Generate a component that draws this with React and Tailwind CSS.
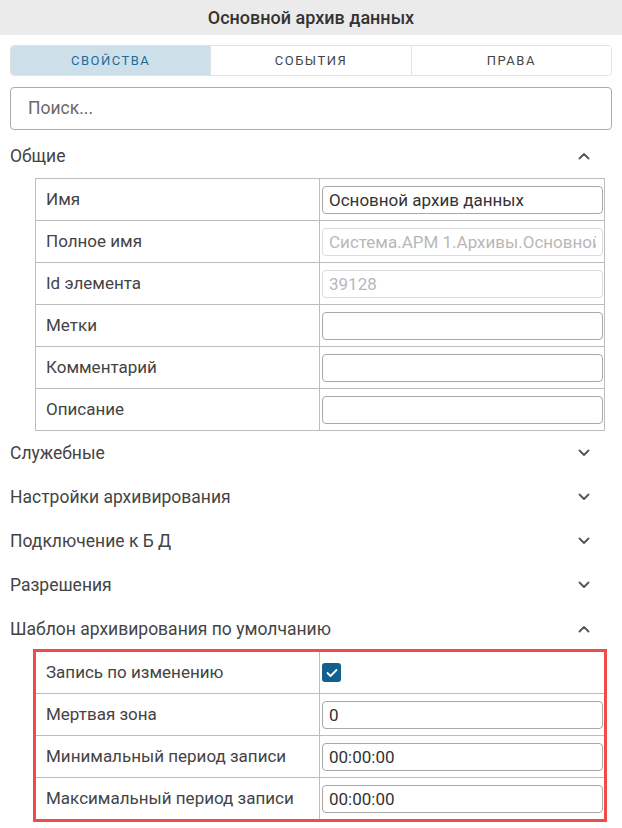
import { useState } from "react";

const TABS = ["Свойства", "События", "Права"];

const GENERAL = [
  { label: "Имя", value: "Основной архив данных" },
  { label: "Полное имя", value: "Система.АРМ 1.Архивы.Основной архив данных", disabled: true },
  { label: "Id элемента", value: "39128", disabled: true },
  { label: "Метки", value: "" },
  { label: "Комментарий", value: "" },
  { label: "Описание", value: "" },
];

const COLLAPSED = ["Служебные", "Настройки архивирования", "Подключение к Б Д", "Разрешения"];

const TEMPLATE = [
  { label: "Запись по изменению", check: true },
  { label: "Мертвая зона", value: "0" },
  { label: "Минимальный период записи", value: "00:00:00" },
  { label: "Максимальный период записи", value: "00:00:00" },
];

function Chevron({ up }) {
  return (
    <svg width="12" height="8" viewBox="0 0 12 8" className="mr-[32px]">
      <path
        d={up ? "M1.5 6.5 L6 2 L10.5 6.5" : "M1.5 1.5 L6 6 L10.5 1.5"}
        fill="none"
        stroke="#555"
        strokeWidth="1.8"
        strokeLinecap="round"
        strokeLinejoin="round"
      />
    </svg>
  );
}

function SectionHeader({ title, open }) {
  return (
    <div className="flex h-[44px] items-center justify-between pl-[10px]">
      <span className="text-[17.5px] text-[#444]">{title}</span>
      <Chevron up={open} />
    </div>
  );
}

function Field({ row }) {
  if (row.check) {
    return (
      <div className="flex h-[19px] w-[19px] items-center justify-center rounded-[3px] bg-[#11618f]">
        <svg width="12" height="10" viewBox="0 0 12 10">
          <path d="M1.5 5 L4.5 8 L10.5 2" fill="none" stroke="#fff" strokeWidth="1.8" strokeLinecap="round" strokeLinejoin="round" />
        </svg>
      </div>
    );
  }
  return (
    <input
      readOnly
      value={row.value}
      disabled={row.disabled}
      className={
        row.disabled
          ? "h-[28px] w-full overflow-hidden rounded-[4px] border border-[#dcdcdc] bg-white px-[6px] text-[17px] text-[#b8b8b8] outline-none"
          : "h-[28px] w-full overflow-hidden rounded-[4px] border border-[#a8a8a8] bg-white px-[6px] text-[17px] text-[#333] outline-none"
      }
    />
  );
}

function PropTable({ rows, highlight }) {
  return (
    <div
      className={
        highlight
          ? "ml-[35px] w-[570px] border border-[#bdbdbd] outline-[3px] -outline-offset-1 outline-[#f04a4a]"
          : "ml-[35px] w-[570px] border border-[#bdbdbd]"
      }
    >
      {rows.map((row, i) => (
        <div key={row.label} className={i > 0 ? "flex h-[42px] border-t border-[#bdbdbd]" : "flex h-[41px]"}>
          <div className="flex w-[284px] items-center border-r border-[#bdbdbd] pl-[10px] text-[17px] text-[#444]">
            {row.label}
          </div>
          <div className="flex flex-1 items-center pl-[2px] pr-[1px]">
            <Field row={row} />
          </div>
        </div>
      ))}
    </div>
  );
}

export default function App() {
  const [tab, setTab] = useState(0);

  return (
    <div className="h-[828px] w-[622px] overflow-hidden bg-white" style={{ fontFamily: "Roboto, 'Noto Sans', sans-serif" }}>
      <div className="flex h-[35px] items-center justify-center bg-[#ebebeb] text-[18px] font-medium text-[#333]">
        Основной архив данных
      </div>

      <div className="mx-[10px] mt-[10px] flex h-[31px] overflow-hidden rounded-[4px] border border-[#e2e2e2]">
        {TABS.map((t, i) => (
          <button
            key={t}
            onClick={() => setTab(i)}
            className={
              (i > 0 ? "border-l border-[#e2e2e2] " : "") +
              (tab === i
                ? "flex-1 bg-[#cde0ea] text-[13px] uppercase tracking-[1.5px] text-[#1f6b98]"
                : "flex-1 bg-white text-[13px] uppercase tracking-[1.5px] text-[#444]")
            }
          >
            {t}
          </button>
        ))}
      </div>

      <div className="mx-[10px] mt-[11px] flex h-[43px] items-center rounded-[4px] border border-[#ababab] px-[17px]">
        <input
          placeholder="Поиск..."
          className="w-full bg-transparent text-[17.5px] text-[#333] outline-none placeholder:text-[#6a6a6a]"
        />
      </div>

      <div className="mt-[4px]">
        <SectionHeader title="Общие" open />
        <PropTable rows={GENERAL} />
        {COLLAPSED.map((s) => (
          <SectionHeader key={s} title={s} />
        ))}
        <SectionHeader title="Шаблон архивирования по умолчанию" open />
        <PropTable rows={TEMPLATE} highlight />
      </div>
    </div>
  );
}
